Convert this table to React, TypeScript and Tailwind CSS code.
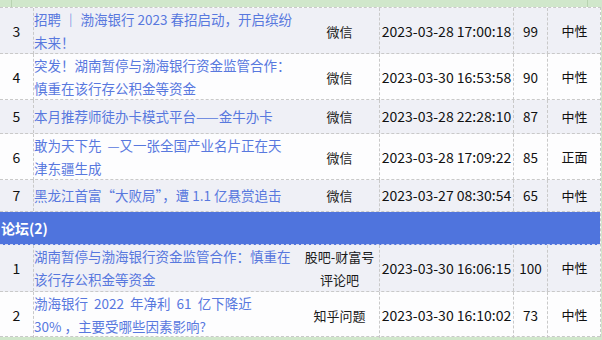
const news = [
  { no: "3", title: ["招聘 ｜ 渤海银行 2023 春招启动，开启缤纷", "未来！"], src: ["微信"], time: "2023-03-28 17:00:18", score: "99", tone: "中性", h: "h-[46px]" },
  { no: "4", title: ["突发！湖南暂停与渤海银行资金监管合作：", "慎重在该行存公积金等资金"], src: ["微信"], time: "2023-03-30 16:53:58", score: "90", tone: "中性", h: "h-[46px]" },
  { no: "5", title: ["本月推荐师徒办卡模式平台——金牛办卡"], src: ["微信"], time: "2023-03-28 22:28:10", score: "87", tone: "中性", h: "h-[34px]" },
  { no: "6", title: ["敢为天下先  —又一张全国产业名片正在天", "津东疆生成"], src: ["微信"], time: "2023-03-28 17:09:22", score: "85", tone: "正面", h: "h-[46px]" },
  { no: "7", title: ["黑龙江首富“大败局”，遭 1.1 亿悬赏追击"], src: ["微信"], time: "2023-03-27 08:30:54", score: "65", tone: "中性", h: "h-[32px]" },
];

const forum = [
  { no: "1", title: ["湖南暂停与渤海银行资金监管合作：慎重在", "该行存公积金等资金"], src: ["股吧-财富号", "评论吧"], time: "2023-03-30 16:06:15", score: "100", tone: "中性", h: "h-[47px]" },
  { no: "2", title: ["渤海银行  2022  年净利  61  亿下降近", "30% ，主要受哪些因素影响?"], src: ["知乎问题"], time: "2023-03-30 16:10:02", score: "73", tone: "中性", h: "h-[45px]" },
];

type Item = (typeof news)[number];

function Row({ item, odd }: { item: Item; odd: boolean }) {
  return (
    <div
      className={`grid grid-cols-[34px_266px_80px_134px_34px_53px] border-b border-dashed border-[#c9c9c9] ${item.h} ${
        odd ? "bg-[#eff0f6]" : "bg-[#fdfdfe]"
      }`}
    >
      <div className="flex items-center justify-center border-r border-dashed border-[#c9c9c9] text-[14px] text-[#111]">
        {item.no}
      </div>
      <div className="flex flex-col justify-center text-[13.5px] leading-[23px] text-[#5878de] whitespace-pre">
        {item.title.map((t) => (
          <div key={t}>{t}</div>
        ))}
      </div>
      <div className="flex flex-col items-center justify-center border-r border-dashed border-[#c9c9c9] text-[13px] leading-[23px] text-[#1a1a1a]">
        {item.src.map((s) => (
          <div key={s}>{s}</div>
        ))}
      </div>
      <div className="flex items-center justify-center border-r border-dashed border-[#c9c9c9] text-[14px] text-[#111]">
        {item.time}
      </div>
      <div className="flex items-center justify-center border-r border-dashed border-[#c9c9c9] text-[13.5px] text-[#111]">
        {item.score}
      </div>
      <div className="flex items-center justify-center text-[13px] text-[#111]">{item.tone}</div>
    </div>
  );
}

export default function App() {
  return (
    <div className="w-[602px] h-[340px] overflow-hidden bg-[#d0e7cb] font-['Noto_Sans_CJK_SC','Microsoft_YaHei',sans-serif]">
      <div className="flex h-[7px]">
        <div className="w-[12px] border-r border-[#b8d3b1]" />
        <div className="w-[576px] border-r border-[#b8d3b1]" />
      </div>
      <div className="w-[601px] border-t border-r border-dashed border-[#c9c9c9] bg-[#fdfdfe]">
        {news.map((item, i) => (
          <Row key={item.no} item={item} odd={i % 2 === 0} />
        ))}
        <div className="flex h-[33px] items-center border-b border-dashed border-[#d6d9f0] bg-[#4f74dd] pl-[1px] text-[14px] font-bold text-white">
          论坛(2)
        </div>
        {forum.map((item, i) => (
          <Row key={item.no} item={item} odd={i % 2 === 0} />
        ))}
      </div>
    </div>
  );
}
